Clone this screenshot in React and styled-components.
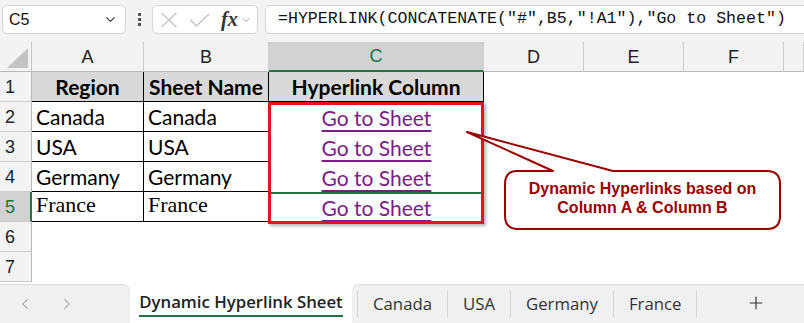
import React from "react";
import styled, { createGlobalStyle } from "styled-components";
import { ChevronDown, ChevronLeft, ChevronRight, Plus } from "lucide-react";

const GlobalStyle = createGlobalStyle`
  html, body { margin: 0; padding: 0; background: #fff; }
  body { font-family: "Liberation Sans", Arial, sans-serif; }
  #root { width: 804px; height: 323px; overflow: hidden; }
`;

const GREEN = "#217346";

const rows = [
  { n: 1, a: "Region", b: "Sheet Name", c: "Hyperlink Column", head: true },
  { n: 2, a: "Canada", b: "Canada", c: "Go to Sheet" },
  { n: 3, a: "USA", b: "USA", c: "Go to Sheet" },
  { n: 4, a: "Germany", b: "Germany", c: "Go to Sheet" },
  { n: 5, a: "France", b: "France", c: "Go to Sheet", serif: true, sel: true },
  { n: 6 },
  { n: 7 },
];

const letters = ["A", "B", "C", "D", "E", "F", ""];
const tabs = ["Canada", "USA", "Germany", "France"];

const App = () => {
  return (
    <>
      <GlobalStyle />
      <Toolbar>
        <NameBox>
          <span>C5</span>
          <ChevronDown size={15} strokeWidth={1.8} color="#333" />
        </NameBox>
        <Dots>
          <i />
          <i />
          <i />
        </Dots>
        <FuncBox>
          <svg width="18" height="16" viewBox="0 0 18 16">
            <path d="M1.5 1 L16.5 15 M16.5 1 L1.5 15" stroke="#c4c4c4" strokeWidth="1.3" fill="none" />
          </svg>
          <svg width="21" height="14" viewBox="0 0 21 14">
            <path d="M1 6.5 L7.5 13 L20 1" stroke="#c4c4c4" strokeWidth="1.3" fill="none" />
          </svg>
          <Fx>fx</Fx>
          <ChevronDown size={12} strokeWidth={1.6} color="#888" />
        </FuncBox>
        <FormulaBox>=HYPERLINK(CONCATENATE("#",B5,"!A1"),"Go to Sheet")</FormulaBox>
      </Toolbar>

      <Sheet>
        <Grid>
          <Corner>
            <Triangle />
          </Corner>
          {letters.map((l) => (
            <ColHead key={l || "g"} $active={l === "C"}>
              {l}
            </ColHead>
          ))}
          {rows.map((r) => (
            <React.Fragment key={r.n}>
              <RowHead $active={r.sel}>{r.n}</RowHead>
              {r.a ? (
                <>
                  <Cell $boxed $head={r.head} $center={r.head} $serif={r.serif}>
                    {r.a}
                  </Cell>
                  <Cell $boxed $head={r.head} $center={r.head} $serif={r.serif}>
                    {r.b}
                  </Cell>
                  {r.head ? (
                    <Cell $boxed $head $center>
                      {r.c}
                    </Cell>
                  ) : (
                    <Cell $center $sel={r.sel}>
                      <Link>{r.c}</Link>
                    </Cell>
                  )}
                </>
              ) : (
                <>
                  <Cell />
                  <Cell />
                  <Cell />
                </>
              )}
              <Cell />
              <Cell />
              <Cell />
              <Cell />
            </React.Fragment>
          ))}
        </Grid>

        <RedBox />

        <Callout>
          <svg width="330" height="110" viewBox="0 0 330 110">
            <path
              d="M57 46 L93 46 L7 7 L153 46 L307 46 Q320 46 320 59 L320 91 Q320 104 307 104 L58 104 Q45 104 45 91 L45 59 Q45 46 57 46 Z"
              fill="#fff"
              stroke="#9a0000"
              strokeWidth="2"
              strokeLinejoin="round"
            />
          </svg>
          <CalloutText>
            <div>Dynamic Hyperlinks based on</div>
            <div>Column A &amp; Column B</div>
          </CalloutText>
        </Callout>
      </Sheet>

      <TabBar>
        <Nav>
          <ChevronLeft size={18} strokeWidth={1.4} color="#9a9a9a" />
          <ChevronRight size={18} strokeWidth={1.4} color="#9a9a9a" />
        </Nav>
        <ActiveTab>
          <span>Dynamic Hyperlink Sheet</span>
        </ActiveTab>
        <TabRest>
          <Sep />
          {tabs.map((t) => (
            <React.Fragment key={t}>
              <Tab>{t}</Tab>
              <Sep />
            </React.Fragment>
          ))}
          <AddBtn>
            <Plus size={20} strokeWidth={1.4} color="#333" />
          </AddBtn>
        </TabRest>
      </TabBar>
    </>
  );
};

const Toolbar = styled.div`
  display: flex;
  align-items: flex-start;
  height: 42px;
  padding: 5px 0 0 2px;
  box-sizing: border-box;
  background: #f3f3f3;
  overflow: hidden;
`;

const NameBox = styled.div`
  flex: 0 0 124px;
  display: flex;
  align-items: center;
  justify-content: space-between;
  height: 29px;
  box-sizing: border-box;
  padding: 0 7px 0 6px;
  background: #fff;
  border: 1px solid #d6d6d6;
  border-radius: 5px;
  font-size: 16px;
  color: #111;
`;

const Dots = styled.div`
  flex: 0 0 26px;
  display: flex;
  flex-direction: column;
  align-items: center;
  gap: 2px;
  padding-top: 8px;

  i {
    display: block;
    width: 3px;
    height: 3px;
    background: #555;
  }
`;

const FuncBox = styled.div`
  flex: 0 0 106px;
  display: flex;
  align-items: center;
  height: 29px;
  box-sizing: border-box;
  padding: 0 4px 0 7px;
  gap: 10px;
  background: #fff;
  border: 1px solid #d6d6d6;
  border-radius: 5px;

  svg:nth-child(2) {
    margin-left: 1px;
  }
  svg:last-child {
    margin-left: -8px;
  }
`;

const Fx = styled.span`
  font-family: "Liberation Serif", "Times New Roman", serif;
  font-style: italic;
  font-weight: bold;
  font-size: 20px;
  color: #333;
  margin-left: 1px;
`;

const FormulaBox = styled.div`
  flex: 0 0 560px;
  margin-left: 7px;
  height: 29px;
  box-sizing: border-box;
  padding: 3px 0 0 12px;
  background: #fff;
  border: 1px solid #d6d6d6;
  border-radius: 5px;
  font-family: "Liberation Mono", "DejaVu Sans Mono", monospace;
  font-size: 16.6px;
  color: #111;
  white-space: nowrap;
`;

const Sheet = styled.div`
  position: relative;
  height: 240px;
  background: #fff;
`;

const Grid = styled.div`
  display: grid;
  grid-template-columns: 32px 112px 125px 215px 100px 100px 100px 20px;
  grid-template-rows: repeat(8, 30px);
`;

const Corner = styled.div`
  position: relative;
  background: #f3f3f3;
  border-right: 1px solid #c6c6c6;
  border-bottom: 1px solid #b8b8b8;
  box-sizing: border-box;
`;

const Triangle = styled.div`
  position: absolute;
  right: 3px;
  bottom: 3px;
  width: 21px;
  height: 20px;
  background: #c3c3c3;
  clip-path: polygon(100% 0, 100% 100%, 0 100%);
`;

const ColHead = styled.div`
  display: flex;
  align-items: center;
  justify-content: center;
  box-sizing: border-box;
  padding-top: 1px;
  background: ${(p) => (p.$active ? "#d2d2d2" : "#f3f3f3")};
  color: ${(p) => (p.$active ? GREEN : "#222")};
  border-right: 1px solid #cdcdcd;
  border-bottom: ${(p) => (p.$active ? `2px solid ${GREEN}` : "1px solid #b8b8b8")};
  font-size: 18px;
`;

const RowHead = styled.div`
  display: flex;
  align-items: center;
  box-sizing: border-box;
  padding: 1px 0 0 5px;
  background: ${(p) => (p.$active ? "#d2d2d2" : "#f3f3f3")};
  color: ${(p) => (p.$active ? GREEN : "#222")};
  border-right: ${(p) => (p.$active ? `2px solid ${GREEN}` : "1px solid #b8b8b8")};
  border-bottom: 1px solid #cdcdcd;
  font-size: 18px;
`;

const Cell = styled.div`
  display: flex;
  align-items: flex-end;
  justify-content: ${(p) => (p.$center ? "center" : "flex-start")};
  box-sizing: border-box;
  padding: 0 4px ${(p) => (p.$serif ? "4px" : "2px")};
  font-family: ${(p) =>
    p.$serif ? '"Liberation Serif", "Times New Roman", serif' : 'Lato, "Open Sans", sans-serif'};
  font-size: ${(p) => (p.$serif ? "22px" : "21px")};
  line-height: 24px;
  font-weight: ${(p) => (p.$head ? 700 : 400)};
  color: #000;
  white-space: nowrap;
  background: ${(p) => (p.$head ? "#d9d9d9" : "#fff")};
  border-right: ${(p) => (p.$boxed ? "1px solid #000" : "none")};
  border-bottom: ${(p) => (p.$boxed ? "1px solid #000" : "none")};
  border-top: ${(p) => (p.$sel ? `2px solid ${GREEN}` : "none")};
`;

const Link = styled.span`
  color: #7b1d86;
  text-decoration: underline;
  text-decoration-thickness: 2px;
  text-underline-offset: 4px;
`;

const RedBox = styled.div`
  position: absolute;
  left: 268px;
  top: 60px;
  width: 216px;
  height: 122px;
  box-sizing: border-box;
  border: 3px solid #e3151b;
  box-shadow: 2px 2px 3px rgba(0, 0, 0, 0.3);
`;

const Callout = styled.div`
  position: absolute;
  left: 460px;
  top: 83px;
  width: 330px;
  height: 110px;

  svg {
    position: absolute;
    inset: 0;
  }
`;

const CalloutText = styled.div`
  position: relative;
  display: flex;
  flex-direction: column;
  align-items: center;
  justify-content: center;
  margin: 46px 10px 0 45px;
  height: 56px;
  padding-bottom: 3px;
  box-sizing: border-box;
  font-family: "Liberation Sans", Arial, sans-serif;
  font-weight: bold;
  font-size: 16px;
  line-height: 19px;
  color: #9a0000;
`;

const TabBar = styled.div`
  display: flex;
  height: 41px;
  background: #fff;
  font-family: "Open Sans", "Noto Sans", sans-serif;
  font-size: 16.75px;
  color: #333;
`;

const Nav = styled.div`
  flex: 0 0 130px;
  display: flex;
  align-items: center;
  gap: 24px;
  margin-top: 2px;
  padding-left: 16px;
  box-sizing: border-box;
  background: #f0f0f0;
  border-top: 1px solid #dcdcdc;
  border-top-right-radius: 7px;
`;

const ActiveTab = styled.div`
  flex: 0 0 222px;
  display: flex;
  align-items: center;
  justify-content: center;
  background: #fff;

  span {
    padding-bottom: 2px;
    margin-top: 2px;
    font-weight: 600;
    color: #222;
    border-bottom: 2px solid ${GREEN};
  }
`;

const TabRest = styled.div`
  flex: 1;
  display: flex;
  align-items: center;
  min-width: 0;
  margin-top: 2px;
  background: #f0f0f0;
  border-top: 1px solid #dcdcdc;
  border-top-left-radius: 7px;
`;

const Sep = styled.div`
  flex: 0 0 1px;
  height: 26px;
  background: #d2d2d2;
  &:first-child {
    margin-left: 5px;
  }
`;

const Tab = styled.div`
  flex: none;
  padding: 0 15px 2px;
`;

const AddBtn = styled.div`
  flex: 0 0 118px;
  display: flex;
  align-items: center;
  justify-content: center;
  padding-bottom: 2px;
`;

export default App;
